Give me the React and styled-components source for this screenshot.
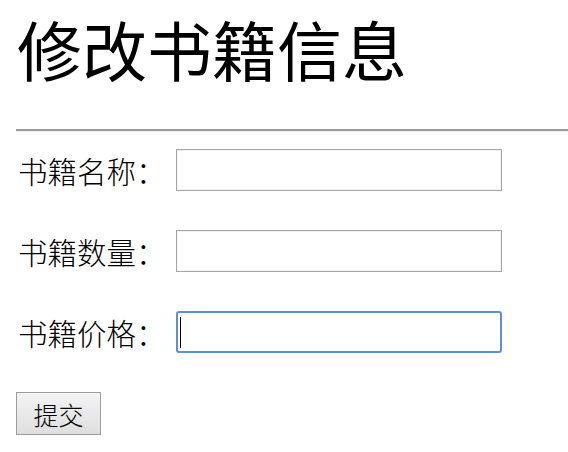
import React from "react";
import styled, { createGlobalStyle } from "styled-components";

const GlobalStyle = createGlobalStyle`
  html, body {
    margin: 0;
    padding: 0;
    background: #ffffff;
  }
  body {
    font-family: "Liberation Serif", "Noto Sans CJK SC", serif;
    color: #000000;
  }
`;

const fields = [
  { label: "书籍名称：", focused: false },
  { label: "书籍数量：", focused: false },
  { label: "书籍价格：", focused: true },
];

function App() {
  return (
    <>
      <GlobalStyle />
      <Page>
        <Title>修改书籍信息</Title>
        <Divider />
        <Form onSubmit={(e) => e.preventDefault()}>
          {fields.map((field) => (
            <Row key={field.label}>
              <Label>{field.label}</Label>
              <InputWrap>
                <Input type='text' $focused={field.focused} />
                {field.focused && <Caret />}
              </InputWrap>
            </Row>
          ))}
          <SubmitButton type='submit'>提交</SubmitButton>
        </Form>
      </Page>
    </>
  );
}

const Page = styled.div`
  padding: 16px 0 0 16px;
  box-sizing: border-box;
`;

const Title = styled.h1`
  margin: 0 0 48px 1px;
  font-family: "Noto Sans CJK SC", sans-serif;
  font-size: 65px;
  font-weight: 400;
  line-height: 65px;
  letter-spacing: 0;
`;

const Divider = styled.hr`
  margin: 0;
  height: 0;
  border: none;
  border-top: 2px solid #9a9a9a;
  border-bottom: 1px solid #ededed;
`;

const Form = styled.form`
  margin-top: 17px;
  display: flex;
  flex-direction: column;
  align-items: flex-start;
  gap: 39px;
`;

const Row = styled.div`
  display: flex;
  align-items: center;
  height: 42px;
`;

const Label = styled.label`
  width: 160px;
  padding-left: 2px;
  box-sizing: border-box;
  font-family: "Noto Sans CJK SC", sans-serif;
  font-size: 29.5px;
  font-weight: 300;
  line-height: 42px;
  white-space: nowrap;
`;

const InputWrap = styled.div`
  position: relative;
  display: flex;
`;

const Input = styled.input`
  width: 326px;
  height: 42px;
  margin: 0;
  padding: 0 4px;
  box-sizing: border-box;
  border: ${(p) => (p.$focused ? "2px solid #5f8fdb" : "1px solid #a6a6a6")};
  border-radius: ${(p) => (p.$focused ? "3px" : "0")};
  box-shadow: ${(p) => (p.$focused ? "none" : "inset 0 0 0 1px #f2f2f2")};
  background: #ffffff;
  font-size: 24px;
  outline: none;
`;

const Caret = styled.span`
  position: absolute;
  left: 4px;
  top: 6px;
  width: 1px;
  height: 31px;
  background: #000000;
`;

const SubmitButton = styled.button`
  width: 85px;
  height: 43px;
  margin: 0;
  padding: 0;
  border: 1px solid #9c9c9c;
  border-radius: 0;
  background: linear-gradient(#f4f4f4, #dedede);
  font-family: "Noto Sans CJK SC", sans-serif;
  font-size: 25px;
  font-weight: 300;
  color: #000000;
  cursor: pointer;
`;

export default App;
